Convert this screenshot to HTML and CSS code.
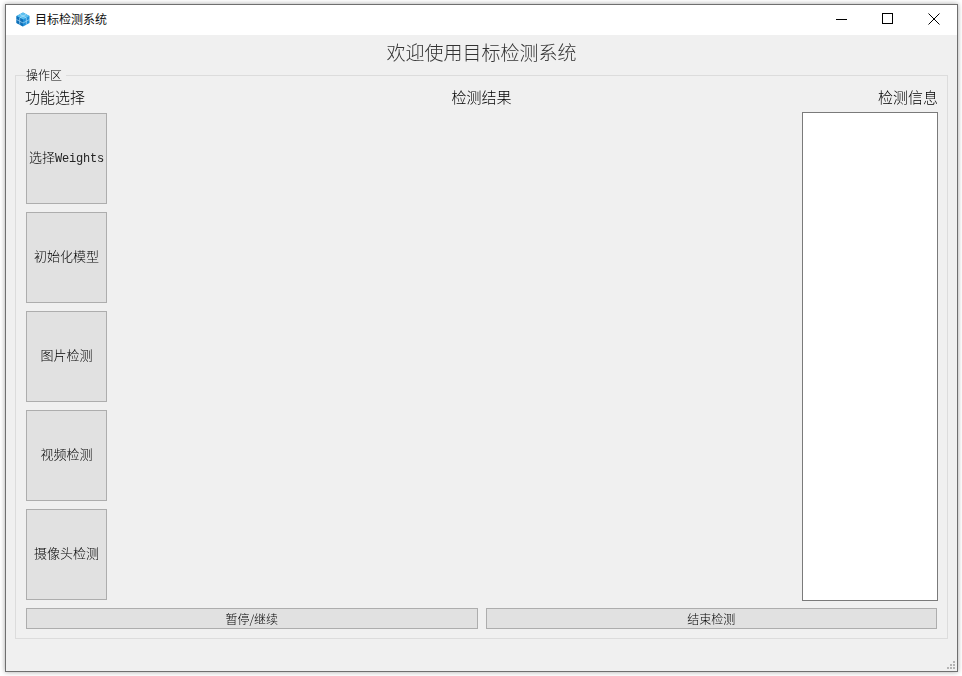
FILE: index.html
```html
<!DOCTYPE html>
<html lang="zh-CN">
<head>
<meta charset="utf-8">
<title>目标检测系统</title>
<link rel="stylesheet" href="styles.css">
</head>
<body>
<div class="window">
  <header class="titlebar">
    <svg class="app-icon" width="14" height="15" viewBox="0 0 14 15">
      <path d="M7 .5 13.5 4v7L7 14.5.5 11V4z" fill="#1f8fd8"/>
      <path d="M7 .5 13.5 4 7 7.5.5 4z" fill="#5cc0f0"/>
      <path d="M7 7.5v7L.5 11V4z" fill="#0f6fb8"/>
      <path d="M3.7 2.3 10.2 5.800M10.300 2.300 3.800 5.800M3.700 5.800v7M10.300 5.800v7M.5 7.500 7 11l6.500-3.500" stroke="#bfe6fa" stroke-width=".6" fill="none"/>
    </svg>
    <span class="app-name">目标检测系统</span>
    <div class="win-controls">
      <svg class="win-btn" width="46" height="30" viewBox="0 0 46 30"><path d="M17 14.500h11" stroke="#000" fill="none"/></svg>
      <svg class="win-btn" width="46" height="30" viewBox="0 0 46 30"><rect x="17.500" y="8.500" width="10" height="10" stroke="#000" fill="none"/></svg>
      <svg class="win-btn" width="46" height="30" viewBox="0 0 46 30"><path d="M17.500 8.500l11 11M28.500 8.500l-11 11" stroke="#000" fill="none"/></svg>
    </div>
  </header>
  <main class="content">
    <h1 class="heading">欢迎使用目标检测系统</h1>
    <fieldset class="group">
      <legend class="group-title">操作区</legend>
      <div class="labels">
        <span>功能选择</span>
        <span>检测结果</span>
        <span>检测信息</span>
      </div>
      <div class="workspace">
        <div class="tools">
          <button class="tool">选择<span class="mono">Weights</span></button>
          <button class="tool">初始化模型</button>
          <button class="tool">图片检测</button>
          <button class="tool">视频检测</button>
          <button class="tool">摄像头检测</button>
        </div>
        <div class="result"></div>
        <div class="info"></div>
      </div>
      <div class="actions">
        <button class="action">暂停/继续</button>
        <button class="action">结束检测</button>
      </div>
    </fieldset>
    <svg class="grip" width="10" height="10" viewBox="0 0 10 10" fill="#b4b4b4">
      <rect x="7" y="1" width="2" height="2"/><rect x="4" y="4" width="2" height="2"/><rect x="7" y="4" width="2" height="2"/>
      <rect x="1" y="7" width="2" height="2"/><rect x="4" y="7" width="2" height="2"/><rect x="7" y="7" width="2" height="2"/>
    </svg>
  </main>
</div>
</body>
</html>
```
FILE: styles.css
```css
* { box-sizing: border-box; }
html, body { height: 100%; }
body {
  margin: 0;
  padding: 4px 4px 4px 5px;
  background: #fff;
  overflow: hidden;
  font-family: "Noto Sans CJK SC", "Liberation Sans", sans-serif;
  color: #000;
}
.window {
  width: 953px;
  height: 668px;
  border: 1px solid #6f6f6f;
  background: #f0f0f0;
  box-shadow: 0 0 5px rgba(0, 0, 0, .35);
  display: flex;
  flex-direction: column;
}
.titlebar {
  height: 30px;
  flex: none;
  background: #fff;
  display: flex;
  align-items: center;
  padding-left: 10px;
}
.app-icon { flex: none; margin-top: -2px; }
.app-name {
  margin-left: 5px;
  margin-top: -4px;
  font-size: 12px;
  color: #111;
}
.win-controls { margin-left: auto; display: flex; }
.win-btn { display: block; }
.content {
  position: relative;
  flex: 1;
  padding: 0 9px 0 9px;
  will-change: opacity;
}
.heading {
  margin: 0;
  height: 31px;
  line-height: 33px;
  font-size: 19px;
  font-weight: 300;
  text-align: center;
  color: #333;
}
.group {
  margin: 0;
  padding: 0 9px 9px 10px;
  height: 573px;
  min-width: 0;
  border: 1px solid #dcdcdc;
  display: flex;
  flex-direction: column;
}
.group-title {
  margin: 0;
  padding: 0 4px 0 0;
  height: 18px;
  line-height: 17px;
  font-size: 12px;
  font-weight: 300;
}
.labels {
  display: flex;
  justify-content: space-between;
  height: 28px;
  margin-left: -1px;
  padding-top: 3px;
  line-height: 20px;
  font-size: 15px;
  font-weight: 300;
}
.workspace {
  display: flex;
  flex: 1;
  min-height: 0;
}
.tools {
  width: 81px;
  flex: none;
  display: flex;
  flex-direction: column;
  gap: 8px;
  padding-top: 1px;
}
.tool, .action {
  border: 1px solid #adadad;
  background: #e1e1e1;
  padding: 0;
  color: #000;
  font-family: inherit;
  font-weight: 300;
}
.tool { height: 91px; font-size: 13px; padding-bottom: 4px; }
.mono { font-family: "Liberation Mono", monospace; font-size: 12px; letter-spacing: -.18px; font-weight: 400; color: #222; }
.result { flex: 1; }
.info {
  width: 136px;
  height: 489px;
  flex: none;
  border: 1px solid #7a7a7a;
  background: #fff;
}
.actions {
  display: flex;
  gap: 8px;
  margin-top: 8px;
  padding-right: 1px;
}
.action { flex: 1; height: 21px; font-size: 12px; padding-bottom: 1px; }
.grip { position: absolute; right: 1px; bottom: 1px; }
```
